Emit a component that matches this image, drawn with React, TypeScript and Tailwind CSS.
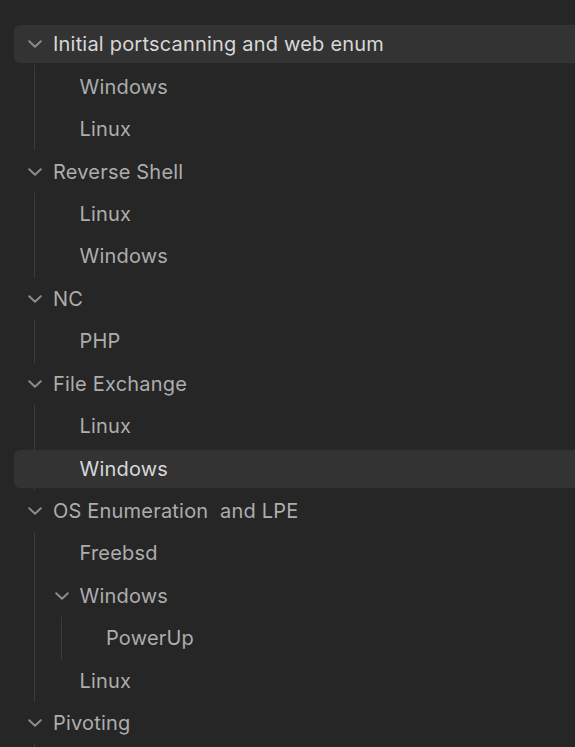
import React from "react";

type Node = { name: string; children?: Node[]; active?: boolean; hover?: boolean };

const tree: Node[] = [
  { name: "Initial portscanning and web enum", hover: true, children: [{ name: "Windows" }, { name: "Linux" }] },
  { name: "Reverse Shell", children: [{ name: "Linux" }, { name: "Windows" }] },
  { name: "NC", children: [{ name: "PHP" }] },
  { name: "File Exchange", children: [{ name: "Linux" }, { name: "Windows", active: true }] },
  {
    name: "OS Enumeration  and LPE",
    children: [
      { name: "Freebsd" },
      { name: "Windows", children: [{ name: "PowerUp" }] },
      { name: "Linux" },
    ],
  },
  { name: "Pivoting", children: [] },
];

const Chevron = () => (
  <svg width="14" height="8" viewBox="0 0 14 8" fill="none" className="shrink-0">
    <path d="M1.2 1.2 L7 6.8 L12.8 1.2" stroke="#8a8a8a" strokeWidth="2" strokeLinecap="round" strokeLinejoin="round" />
  </svg>
);

const padClasses = ["pl-[13px]", "pl-[39.5px]", "pl-[66px]"];
const textPad = ["pl-[39px]", "pl-[65.5px]", "pl-[92px]"];
const linePos = ["left-[20px]", "left-[46.5px]", "left-[73px]"];

function Item({ node, depth }: { node: Node; depth: number }) {
  const isFolder = !!node.children;
  const hl = node.active || node.hover;
  return (
    <div>
      <div className="h-[42.44px] py-[2.2px] relative z-10">
        <div
          className={`h-full flex items-center rounded-l-[6px] ${hl ? "bg-[#333333]" : ""} ${
            isFolder ? padClasses[depth] : textPad[depth]
          }`}
        >
          {isFolder && (
            <span className="w-[16px] flex justify-center mr-[10px]">
              <Chevron />
            </span>
          )}
          <span
            className={`text-[20px] tracking-[0.2px] whitespace-pre leading-none ${
              hl ? "text-[#d8d8d8]" : "text-[#adadad]"
            }`}
          >
            {node.name}
          </span>
        </div>
      </div>
      {isFolder && (
        <div className={`relative ${node.children!.length === 0 ? "h-[20px]" : ""}`}>
          <div className={`absolute top-0 bottom-0 w-px bg-[#3c3c3c] ${linePos[depth]}`} />
          {node.children!.map((c, i) => (
            <Item key={i} node={c} depth={depth + 1} />
          ))}
        </div>
      )}
    </div>
  );
}

export default function App() {
  return (
    <div
      className="w-[575px] h-[747px] overflow-hidden bg-[#262626] pt-[23px] pl-[14px]"
      style={{ fontFamily: "Inter, 'Noto Sans', sans-serif" }}
    >
      {tree.map((n, i) => (
        <Item key={i} node={n} depth={0} />
      ))}
    </div>
  );
}
